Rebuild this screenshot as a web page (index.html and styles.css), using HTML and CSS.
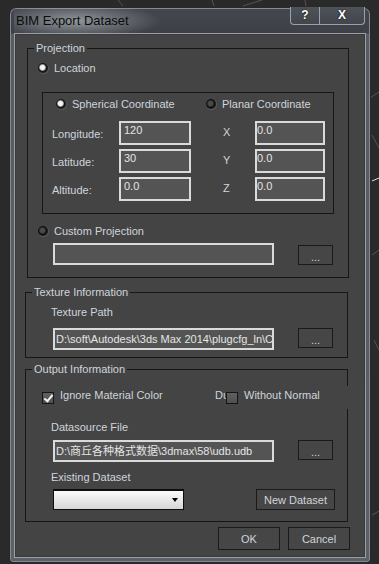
FILE: index.html
```html
<!DOCTYPE html>
<html>
<head>
  <meta charset="UTF-8">
  <title>BIM Export Dataset</title>
  <link rel="stylesheet" href="styles.css">
</head>
<body>

<div class="window">
  <!-- Title bar -->
  <div class="titlebar">
    <span class="title">BIM Export Dataset</span>
    <div class="caption-buttons">
      <span class="cap-btn help">?</span>
      <span class="cap-btn close">X</span>
    </div>
  </div>

  <div class="client">
    <!-- Projection -->
    <fieldset class="group group-projection">
      <legend>Projection</legend>
      <label class="option opt-location"><span class="radio checked"></span>Location</label>

      <div class="coord-box">
        <div class="coord-modes">
          <label class="option mode-spherical"><span class="radio checked"></span>Spherical Coordinate</label>
          <label class="option"><span class="radio"></span>Planar Coordinate</label>
        </div>
        <div class="coord-grid">
          <span class="field-label">Longitude:</span>
          <div class="textbox">120</div>
          <span class="axis">X</span>
          <div class="textbox tight">0.0</div>

          <span class="field-label">Latitude:</span>
          <div class="textbox">30</div>
          <span class="axis">Y</span>
          <div class="textbox tight">0.0</div>

          <span class="field-label">Altitude:</span>
          <div class="textbox">0.0</div>
          <span class="axis">Z</span>
          <div class="textbox tight">0.0</div>
        </div>
      </div>

      <label class="option opt-custom"><span class="radio"></span>Custom Projection</label>
      <div class="path-row custom-row">
        <div class="textbox path"></div>
        <button class="btn browse">...</button>
      </div>
    </fieldset>

    <!-- Texture Information -->
    <fieldset class="group group-texture">
      <legend>Texture Information</legend>
      <div class="section-label">Texture Path</div>
      <div class="path-row">
        <div class="textbox path">D:\soft\Autodesk\3ds Max 2014\plugcfg_ln\Config</div>
        <button class="btn browse">...</button>
      </div>
    </fieldset>

    <!-- Output Information -->
    <fieldset class="group group-output">
      <legend>Output Information</legend>
      <div class="check-row">
        <label class="check-option ignore"><span class="checkbox checked"></span><span class="check-text">Ignore Material Color</span></label>
        <span class="clipped">Du</span>
        <label class="check-option no-normal"><span class="checkbox"></span><span class="check-text">Without Normal</span></label>
      </div>
      <div class="section-label datasource">Datasource File</div>
      <div class="path-row">
        <div class="textbox path">D:\商丘各种格式数据\3dmax\58\udb.udb</div>
        <button class="btn browse">...</button>
      </div>
      <div class="section-label existing">Existing Dataset</div>
      <div class="dataset-row">
        <div class="dropdown"><span class="arrow"></span></div>
        <button class="btn new-dataset">New Dataset</button>
      </div>
    </fieldset>

    <div class="footer">
      <button class="btn dialog-btn">OK</button>
      <button class="btn dialog-btn">Cancel</button>
    </div>
  </div>
</div>

</body>
</html>
```

FILE: styles.css
```css
* {
  box-sizing: border-box;
}
body {
  margin: 0;
  width: 379px;
  height: 564px;
  overflow: hidden;
  font-family: "Liberation Sans", "Noto Sans CJK SC", sans-serif;
  font-size: 11px;
  color: #cfd4dc;
  background-color: #2a2a2a;
  background-image: url("data:image/svg+xml,%3Csvg xmlns='http://www.w3.org/2000/svg' width='379' height='564'%3E%3Cg stroke='%23555' stroke-width='1' fill='none'%3E%3Cpath d='M118 0L123 6M212 0L214 6M243 6L262 0M305 0L306 6M370 98L379 92M372 135L379 148M372 255L379 250M374 340L379 350M372 515L379 511'/%3E%3Cpath d='M372 181L379 178' stroke='%23ddd'/%3E%3C/g%3E%3C/svg%3E");
}

/* window frame */
.window {
  width: 362px;
  height: 556px;
  margin: 7px 0 0 9px;
  padding: 0 4px 4px;
  border: 1px solid #25282c;
  border-radius: 7px 7px 4px 4px;
  background: linear-gradient(180deg, #44484e 0, #3d4147 25px, #575c63 26px, #5c6168 100%);
  box-shadow: inset 0 0 0 1px #858a91;
  display: flex;
  flex-direction: column;
}
.titlebar {
  height: 25px;
  display: flex;
  justify-content: space-between;
  align-items: flex-start;
  padding-left: 2px;
  background: radial-gradient(ellipse 85px 18px at 62px 13px, rgba(180, 185, 190, 0.7), rgba(180, 185, 190, 0));
}
.title {
  margin-top: 5px;
  font-size: 13px;
  line-height: 16px;
  color: #0c0c0c;
}
.caption-buttons {
  display: flex;
  margin: -1px 1px 0 0;
}
.cap-btn {
  height: 18px;
  border: 1px solid #9ca1a8;
  border-top: none;
  background: linear-gradient(#4e5359, #42464c);
  color: #fff;
  font-weight: bold;
  font-size: 12px;
  line-height: 17px;
  text-align: center;
  text-shadow: 0 0 2px #000;
}
.cap-btn.help {
  width: 29px;
  border-radius: 0 0 0 4px;
  border-right: none;
}
.cap-btn.close {
  width: 46px;
  border-radius: 0 0 4px 0;
}

.client {
  flex: 1;
  background: #444444;
  border: 1px solid #9ba0a7;
  box-shadow: inset 0 0 0 1px #3a3a3a;
  padding-left: 10px;
}

/* group boxes */
.group {
  margin: 0;
  padding: 0;
  min-width: 0;
  border: 1px solid #161616;
}
.group legend {
  margin-left: 6px;
  padding: 0 2px;
  line-height: 14px;
}
.group-projection {
  width: 322px;
  margin: 7px 0 0 2px;
  padding-bottom: 12px;
}
.group-texture {
  width: 323px;
  margin-top: 7px;
  padding-bottom: 7px;
}
.group-output {
  width: 323px;
  margin-top: 4px;
  padding-bottom: 11px;
}

.option {
  display: flex;
  align-items: center;
  gap: 6px;
  width: max-content;
  height: 14px;
}
.radio {
  width: 10px;
  height: 10px;
  border-radius: 50%;
  background: radial-gradient(circle at 45% 45%, #4a4a4a 0 2px, #303030 3px, #0c0c0c 4px, #1c1c1c 5px);
  box-shadow: 0.5px 0.5px 0 0.5px #5a5a5a;
}
.radio.checked {
  background: radial-gradient(circle at 45% 45%, #f4f4f4 0 2px, #b5b5b5 2.8px, #151515 3.8px, #1c1c1c 5px);
}
.opt-location {
  margin: 6px 0 0 10px;
}
.opt-custom {
  margin: 10px 0 0 10px;
}

.coord-box {
  width: 292px;
  margin: 17px 0 0 14px;
  padding: 4px 0 12px;
  border: 1px solid #161616;
}
.coord-modes {
  display: flex;
  margin-left: 13px;
}
.mode-spherical {
  width: 150px;
}
.coord-grid {
  display: grid;
  grid-template-columns: 67px 104px 32px 70px;
  grid-auto-rows: 24px;
  row-gap: 4px;
  margin: 10px 0 0 9px;
  align-items: center;
}
.field-label {
  padding-top: 1px;
}
.axis {
  padding-bottom: 3px;
}

.textbox {
  height: 24px;
  width: 72px;
  border: 2px solid #dadada;
  background: #545454;
  color: #e4e4e4;
  padding: 0 3px;
  line-height: 14px;
  white-space: nowrap;
  overflow: hidden;
}
.textbox.tight {
  width: 70px;
  padding: 0;
}
.textbox.path {
  width: 221px;
  height: 22px;
  padding: 0 1px;
  line-height: 18px;
  flex-shrink: 0;
}

.path-row {
  display: flex;
  align-items: flex-start;
  gap: 24px;
  margin: 9px 0 0 27px;
}
.custom-row {
  margin: 5px 0 0 25px;
  align-items: flex-end;
}

.btn {
  font-family: inherit;
  font-size: 11px;
  color: #cfd4dc;
  background: #464646;
  border: 1px solid #1a1a1a;
  padding: 0;
  line-height: 14px;
}
.browse {
  width: 35px;
  height: 20px;
  padding-top: 3px;
}

.section-label {
  margin: 6px 0 0 25px;
  line-height: 14px;
}
.section-label.datasource {
  margin-top: 11px;
}
.section-label.existing {
  margin-top: 8px;
}
.group-output .path-row {
  margin-top: 6px;
}

.check-row {
  display: flex;
  align-items: center;
  height: 23px;
  margin-top: 10px;
}
.check-option {
  display: flex;
  align-items: center;
  gap: 6px;
  flex-shrink: 0;
}
.check-text,
.clipped {
  margin-bottom: 6px;
}
.checkbox {
  width: 12px;
  height: 12px;
  border: 1px solid #151515;
  background: linear-gradient(#606060, #505050);
  position: relative;
}
.checkbox.checked::after {
  content: "";
  position: absolute;
  left: 3px;
  top: 0px;
  width: 3px;
  height: 7px;
  border: solid #f0f0f0;
  border-width: 0 2px 2px 0;
  transform: rotate(40deg);
}
.ignore {
  width: 173px;
  margin-left: 16px;
}
.clipped {
  width: 11px;
  overflow: hidden;
  white-space: nowrap;
  flex-shrink: 0;
}
.no-normal {
  width: 126px;
  height: 23px;
  background: #444444;
}

.dataset-row {
  display: flex;
  align-items: flex-start;
  margin: 5px 0 0 27px;
}
.dropdown {
  width: 131px;
  height: 21px;
  border: 1px solid #0e0e0e;
  border-top-width: 2px;
  background: linear-gradient(#fbfbfb, #d6d6d6);
  display: flex;
  align-items: center;
  justify-content: flex-end;
  padding-right: 5px;
}
.arrow {
  width: 0;
  height: 0;
  border-left: 3px solid transparent;
  border-right: 3px solid transparent;
  border-top: 4px solid #000;
}
.new-dataset {
  width: 79px;
  height: 21px;
  margin-left: 72px;
}

.footer {
  display: flex;
  justify-content: flex-end;
  gap: 8px;
  margin: 5px 15px 0 0;
}
.dialog-btn {
  width: 62px;
  height: 23px;
}
```
